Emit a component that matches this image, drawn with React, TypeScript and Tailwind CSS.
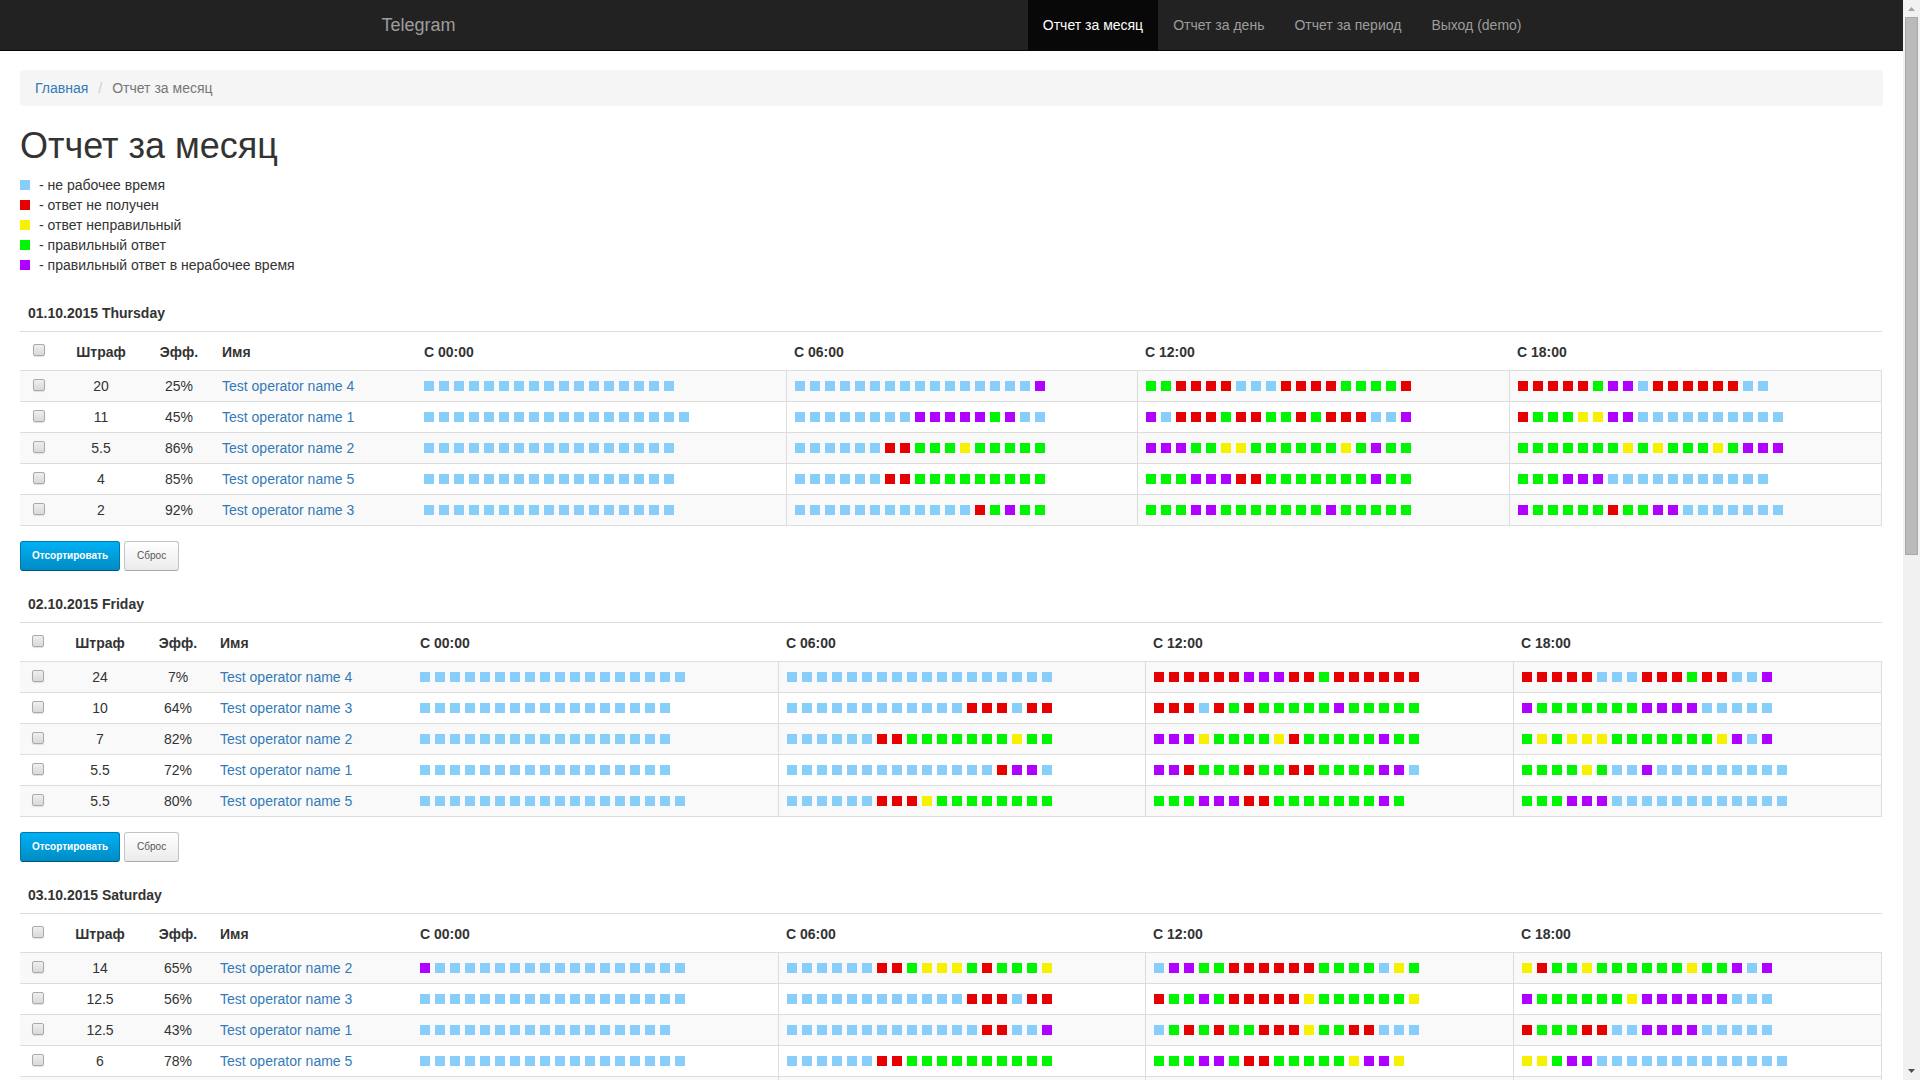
const colors: Record<string, string> = {
  b: "bg-[#87cefa]",
  r: "bg-[#e60000]",
  y: "bg-[#f5f100]",
  g: "bg-[#00f500]",
  p: "bg-[#b000ff]",
}

const legend = [
  { color: "b", label: "не рабочее время" },
  { color: "r", label: "ответ не получен" },
  { color: "y", label: "ответ неправильный" },
  { color: "g", label: "правильный ответ" },
  { color: "p", label: "правильный ответ в нерабочее время" },
]

const navItems = [
  { label: "Отчет за месяц", active: true },
  { label: "Отчет за день", active: false },
  { label: "Отчет за период", active: false },
  { label: "Выход (demo)", active: false },
]

const hours = ["00:00", "06:00", "12:00", "18:00"]

type Row = { fine: string; eff: string; name: string; marks: string[] }
type Day = { id: string; title: string; cols: string[]; rows: Row[]; actions: boolean }

const evenCols = ["w-9", "w-[88px]", "w-[68px]", "w-[200px]", "w-[366px]", "w-[367px]", "w-[368px]", ""]

// marks are run-length encoded, "b6r2g" = six blue, two red, one green
const days: Day[] = [
  {
    id: "d1",
    title: "01.10.2015 Thursday",
    cols: ["w-[38px]", "w-[86px]", "w-[70px]", "w-[202px]", "w-[370px]", "w-[351px]", "w-[372px]", ""],
    actions: true,
    rows: [
      { fine: "20", eff: "25%", name: "Test operator name 4", marks: ["b17", "b16p", "g2r4b3r4g4r", "r5gp2br6b2"] },
      { fine: "11", eff: "45%", name: "Test operator name 1", marks: ["b18", "b8p5gpb2", "pbr3gr2g2rgr3b2p", "rg3y2p2b10"] },
      { fine: "5.5", eff: "86%", name: "Test operator name 2", marks: ["b17", "b6r2g3yg5", "p3g2y2g6ygpg2", "g7ygyg3ygp3"] },
      { fine: "4", eff: "85%", name: "Test operator name 5", marks: ["b17", "b6r2g9", "g3p3r2g7pg2", "g3p3b11"] },
      { fine: "2", eff: "92%", name: "Test operator name 3", marks: ["b17", "b12rgpg2", "g3p2g7pg5", "pg5rg2p2b7"] },
    ],
  },
  {
    id: "d2",
    title: "02.10.2015 Friday",
    cols: evenCols,
    actions: true,
    rows: [
      { fine: "24", eff: "7%", name: "Test operator name 4", marks: ["b18", "b18", "r6p3r2gr6", "r5b3r3gr2b2p"] },
      { fine: "10", eff: "64%", name: "Test operator name 3", marks: ["b17", "b12r3br2", "r3brgrg5pg5", "pg7p4b5"] },
      { fine: "7", eff: "82%", name: "Test operator name 2", marks: ["b17", "b6r2g7yg2", "p3yg4yrg5pg2", "gygy3g7ypbp"] },
      { fine: "5.5", eff: "72%", name: "Test operator name 1", marks: ["b17", "b14rp2b", "p2rg3rg2r2g4p2b", "g4ygb2pb9"] },
      { fine: "5.5", eff: "80%", name: "Test operator name 5", marks: ["b18", "b6r3yg8", "g3p3r2g7pg", "g3p3b12"] },
    ],
  },
  {
    id: "d3",
    title: "03.10.2015 Saturday",
    cols: evenCols,
    actions: false,
    rows: [
      { fine: "14", eff: "65%", name: "Test operator name 2", marks: ["pb17", "b6r2gy3grg3y", "bp2g2r6g4byg", "yrg2yg6yg2pbp"] },
      { fine: "12.5", eff: "56%", name: "Test operator name 3", marks: ["b18", "b12r3br2", "rg2pgr5yg6y", "pg6yp6b3"] },
      { fine: "12.5", eff: "43%", name: "Test operator name 1", marks: ["b17", "b13r2b2p", "bgrgrg2r3yg2r2b3", "rg3r2b2p4b5"] },
      { fine: "6", eff: "78%", name: "Test operator name 5", marks: ["b18", "b6r2g10", "g3p2gr2g5yp2y", "y2gp2b13"] },
      { fine: "", eff: "", name: "", marks: ["", "", "", ""] },
    ],
  },
]

function expand(code: string) {
  return code.replace(/([a-z])(\d+)/g, (_, c: string, n: string) => c.repeat(Number(n))).split("")
}

function Marks({ code }: { code: string }) {
  return (
    <div className="flex gap-[5px]">
      {expand(code).map((c, i) => (
        <span key={i} className={`w-2.5 h-2.5 ${colors[c]}`} />
      ))}
    </div>
  )
}

function Check({ label }: { label: string }) {
  return (
    <input
      type="checkbox"
      aria-label={label}
      className="block mx-auto mb-0.5 w-3 h-3 appearance-none rounded-[2px] border border-[#aaa] bg-gradient-to-b from-[#efefef] to-[#d9d9d9] shadow-[0_1px_1px_#e0e0e0]"
    />
  )
}

function DayReport({ day }: { day: Day }) {
  return (
    <section className="mb-[15px]">
      <table className="w-full table-fixed border-separate border-spacing-0">
        <caption className="text-left font-bold leading-5 p-2">{day.title}</caption>
        <colgroup>
          {day.cols.map((width, i) => (
            <col key={i} className={width} />
          ))}
        </colgroup>
        <thead>
          <tr className="h-[39px] [&>th]:border-t [&>th]:border-[#ddd] [&>th]:px-2 [&>th+th]:pt-0.5">
            <th>
              <Check label="Выбрать все" />
            </th>
            <th>Штраф</th>
            <th>Эфф.</th>
            <th className="text-left">Имя</th>
            {hours.map((hour) => (
              <th key={hour} className="text-left">
                С {hour}
              </th>
            ))}
          </tr>
        </thead>
        <tbody className="[&>tr:last-child>td]:border-b [&>tr:last-child]:h-8">
          {day.rows.map((row, i) => (
            <tr key={i} className="h-[31px] odd:bg-[#f9f9f9] [&>td]:border-t [&>td]:border-[#ddd] [&>td]:px-2">
              <td>{row.name && <Check label={row.name} />}</td>
              <td className="text-center">{row.fine}</td>
              <td className="text-center">{row.eff}</td>
              <td>
                {row.name && (
                  <a href="#" className="text-[#337ab7]">
                    {row.name}
                  </a>
                )}
              </td>
              {row.marks.map((code, j) => (
                <td key={j} className={j === 0 ? "" : j === 3 ? "border-x" : "border-l"}>
                  <Marks code={code} />
                </td>
              ))}
            </tr>
          ))}
        </tbody>
      </table>
      {day.actions && (
        <div className="flex gap-1 mt-[15px]">
          <button className="h-[30px] px-[11px] rounded-[3px] border border-[#0078a8] border-b-[#00567a] bg-gradient-to-b from-[#00b0f4] to-[#008cc4] text-white text-[10px] font-bold">
            Отсортировать
          </button>
          <button className="h-[30px] px-3 rounded-[3px] border border-[#c4c4c4] border-b-[#aaa] bg-gradient-to-b from-white to-[#ebebeb] text-[#555] text-[10px]">
            Сброс
          </button>
        </div>
      )}
    </section>
  )
}

function Scrollbar() {
  return (
    <div className="w-[17px] shrink-0 bg-[#f1f1f1] flex flex-col items-center">
      <svg className="w-[17px] h-[17px] shrink-0" viewBox="0 0 17 17">
        <path d="M5 11h7L8.500 7z" fill="#a3a3a3" />
      </svg>
      <div className="w-[13px] h-[538px] bg-[#bababa] border border-[#a8a8a8]" />
      <svg className="w-[17px] h-[17px] shrink-0 mt-auto" viewBox="0 0 17 17">
        <path d="M5 6h7L8.500 10z" fill="#505050" />
      </svg>
    </div>
  )
}

export default function App() {
  return (
    <div className="flex h-screen overflow-hidden bg-white text-[#333] text-sm font-['Liberation_Sans',Arial,sans-serif]">
      <div className="flex-1 min-w-0 overflow-hidden">
        {/* Navbar */}
        <nav className="bg-[#222] border-b border-[#080808]">
          <div className="max-w-[1170px] mx-auto flex justify-between">
            <a href="#" className="p-[15px] text-lg leading-5 text-[#9d9d9d]">
              Telegram
            </a>
            <div className="flex">
              {navItems.map((item) => (
                <a
                  key={item.label}
                  href="#"
                  className={`p-[15px] leading-5 ${item.active ? "bg-[#080808] text-white" : "text-[#9d9d9d]"}`}
                >
                  {item.label}
                </a>
              ))}
            </div>
          </div>
        </nav>

        <main className="px-5 pt-[19px]">
          {/* Breadcrumb */}
          <div className="flex bg-[#f5f5f5] rounded px-[15px] py-2 mb-5 leading-5">
            <a href="#" className="text-[#337ab7]">
              Главная
            </a>
            <span className="px-2.5 text-[#ccc]">/</span>
            <span className="text-[#777]">Отчет за месяц</span>
          </div>

          <h1 className="text-[36px] leading-10 font-medium mb-[9px]">Отчет за месяц</h1>

          <ul className="mb-5">
            {legend.map((item) => (
              <li key={item.color} className="flex items-center gap-[9px] leading-5">
                <span className={`w-2.5 h-2.5 ${colors[item.color]}`} />
                <span>- {item.label}</span>
              </li>
            ))}
          </ul>

          <div className="pr-px">
            {days.map((day) => (
              <DayReport key={day.id} day={day} />
            ))}
          </div>
        </main>
      </div>
      <Scrollbar />
    </div>
  )
}
